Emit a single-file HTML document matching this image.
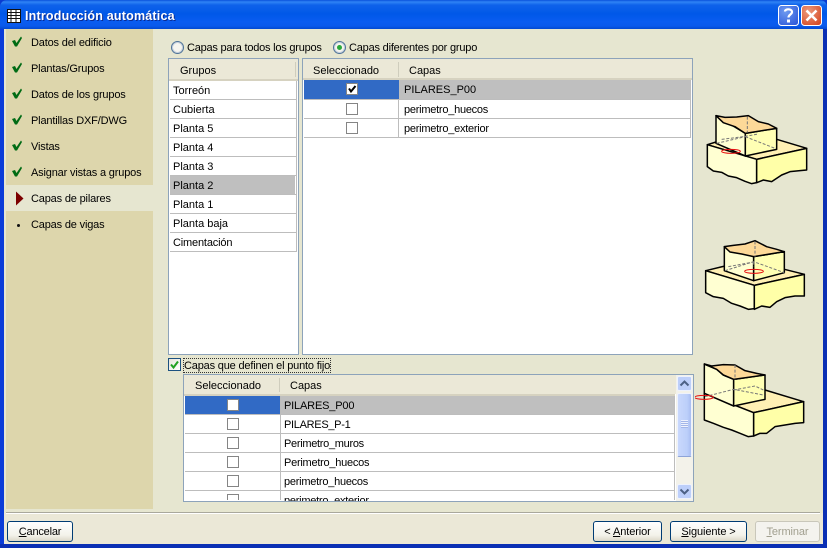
<!DOCTYPE html>
<html><head><meta charset="utf-8"><title>Introducción automática</title>
<style>
html,body{margin:0;padding:0;width:827px;height:548px;overflow:hidden;background:#0a3bd0}
*{box-sizing:border-box}
.a{position:absolute}
.t{position:absolute;white-space:nowrap;font:11px/13px "Liberation Sans",sans-serif;color:#000;margin-top:1px;letter-spacing:-.17px}
.z{letter-spacing:0}
.r{position:absolute;height:1px;background:#bdbdbd}
.cb{position:absolute;width:12px;height:12px;border:1px solid #858585;background:#fff}
.rad{position:absolute;width:13px;height:13px;border-radius:50%;border:1px solid #4f7398;box-shadow:inset 0 0 0 1px #c4cfdc;background:#f6f5ef}
.btn{position:absolute;height:21px;top:521px;border:1px solid #003c74;border-radius:3px;background:linear-gradient(#fff,#f3f2ea 70%,#dcd8c8);font:11px/20px "Liberation Sans",sans-serif;text-align:center;color:#000;letter-spacing:-.1px}
</style></head><body>
<!-- window frame -->
<div class="a" style="left:0;top:0;width:827px;height:548px;border-radius:7px 7px 0 0;background:#0a3ed6"></div>
<div class="a" style="left:0;top:0;width:827px;height:30px;border-radius:7px 7px 0 0;background:linear-gradient(#0a52dc 0,#2f83f5 2px,#0f62ea 5px,#0058e8 14px,#0a5cf0 22px,#0a5aec 26px,#0043c8 30px)"></div>
<div class="a" style="left:0;top:29px;width:4px;height:519px;background:#0a3cd8"></div>
<div class="a" style="left:823px;top:29px;width:4px;height:519px;background:#0a2fb4"></div>
<div class="a" style="left:0;top:544px;width:827px;height:4px;background:#0a2fb4"></div>
<!-- client -->
<div class="a" style="left:4px;top:29px;width:819px;height:515px;background:#e6e6d0"></div>
<div class="a" style="left:4px;top:513px;width:819px;height:31px;background:#ebe8d7"></div>
<div class="a" style="left:6px;top:512px;width:814px;height:1px;background:#a9a89c"></div>
<div class="a" style="left:6px;top:513px;width:814px;height:1px;background:#fff"></div>
<!-- title -->
<svg class="a" style="left:6px;top:8px" width="16" height="16" viewBox="0 0 16 16"><rect x="1.5" y="1.5" width="13" height="13" fill="#fff" stroke="#111"/><path d="M1 4.5H15M1 7.500H15M1 10.500H15M5 1V15M10 1V15" stroke="#111" fill="none"/></svg>
<div class="t z" style="left:25px;top:8px;font:bold 12.5px/15px 'Liberation Sans',sans-serif;color:#fff;text-shadow:1px 1px 0 #0a2a90;letter-spacing:.2px">Introducción automática</div>
<svg class="a" style="left:778px;top:5px" width="44" height="21" viewBox="0 0 44 21">
<defs><radialGradient id="h" cx=".35" cy=".3" r=".9"><stop offset="0" stop-color="#6f9bf0"/><stop offset="1" stop-color="#2a55d8"/></radialGradient><radialGradient id="c" cx=".35" cy=".3" r=".9"><stop offset="0" stop-color="#ec9a7c"/><stop offset="1" stop-color="#d4421c"/></radialGradient></defs>
<rect x=".5" y=".5" width="20" height="20" rx="3" fill="url(#h)" stroke="#fff"/>
<rect x="23.5" y=".5" width="20" height="20" rx="3" fill="url(#c)" stroke="#fff"/>
<path d="M7 6.500C7 3.500 14 3.500 14 7C14 9.500 10.500 9.500 10.500 12.500" fill="none" stroke="#fff" stroke-width="2.200"/><rect x="9" y="14.500" width="3" height="3" fill="#fff"/>
<path d="M28.500 5.500L38.500 15.500M38.500 5.500L28.500 15.500" stroke="#fff" stroke-width="2.600"/>
</svg>
<!-- sidebar -->
<div class="a" style="left:6px;top:29px;width:147px;height:480px;background:#ddd6ac"></div>
<div class="a" style="left:6px;top:185px;width:147px;height:26px;background:#e6e6d0"></div>
<svg class="a" style="left:0;top:0" width="30" height="190" viewBox="0 0 30 190" fill="#006b14">
<path d="M12 41L15 40L16.500 43L21 36.500L22 38L17 46.500H15Z"/>
<path d="M12 67L15 66L16.500 69L21 62.500L22 64L17 72.500H15Z"/>
<path d="M12 93L15 92L16.500 95L21 88.500L22 90L17 98.500H15Z"/>
<path d="M12 119L15 118L16.500 121L21 114.500L22 116L17 124.500H15Z"/>
<path d="M12 145L15 144L16.500 147L21 140.500L22 142L17 150.500H15Z"/>
<path d="M12 171L15 170L16.500 173L21 166.500L22 168L17 176.500H15Z"/>
</svg>
<svg class="a" style="left:15px;top:191px" width="10" height="15" viewBox="0 0 10 15"><path d="M1 0.500V14.500L8.500 7.500Z" fill="#7c0000"/></svg>
<div class="a" style="left:17px;top:224px;width:3px;height:3px;background:#111;border-radius:50%"></div>
<div class="t" style="left:31px;top:36px">Datos del edificio</div>
<div class="t" style="left:31px;top:62px">Plantas/Grupos</div>
<div class="t" style="left:31px;top:88px">Datos de los grupos</div>
<div class="t" style="left:31px;top:114px">Plantillas DXF/DWG</div>
<div class="t" style="left:31px;top:140px">Vistas</div>
<div class="t" style="left:31px;top:166px">Asignar vistas a grupos</div>
<div class="t" style="left:31px;top:192px">Capas de pilares</div>
<div class="t" style="left:31px;top:218px">Capas de vigas</div>
<!-- radios -->
<div class="rad" style="left:171px;top:41px"></div>
<div class="t" style="left:187px;top:41px;letter-spacing:-.22px">Capas para todos los grupos</div>
<div class="rad" style="left:333px;top:41px"></div>
<div class="a" style="left:337px;top:45px;width:5px;height:5px;border-radius:50%;background:#2aa83a"></div>
<div class="t" style="left:349px;top:41px;letter-spacing:-.2px">Capas diferentes por grupo</div>
<!-- groups -->
<div class="a" style="left:168px;top:58px;width:131px;height:297px;border:1px solid #8da3ba;background:#fff"></div>
<div class="a" style="left:169px;top:59px;width:129px;height:20px;background:#ebe8d7"></div>
<div class="a" style="left:169px;top:79px;width:129px;height:2px;background:#d6d2c0"></div>
<div class="a" style="left:295px;top:62px;width:1px;height:15px;background:#cfcdbd"></div>
<div class="t z" style="left:180px;top:64px">Grupos</div>
<div class="a" style="left:170px;top:175px;width:125px;height:19px;background:#bfbfbf"></div>
<div class="a" style="left:296px;top:81px;width:1px;height:171px;background:#bdbdbd"></div>
<div class="r" style="left:170px;top:99px;width:126px"></div>
<div class="r" style="left:170px;top:118px;width:126px"></div>
<div class="r" style="left:170px;top:137px;width:126px"></div>
<div class="r" style="left:170px;top:156px;width:126px"></div>
<div class="r" style="left:170px;top:175px;width:126px"></div>
<div class="r" style="left:170px;top:194px;width:126px"></div>
<div class="r" style="left:170px;top:213px;width:126px"></div>
<div class="r" style="left:170px;top:232px;width:126px"></div>
<div class="r" style="left:170px;top:251px;width:126px"></div>
<div class="t z" style="left:173px;top:84px">Torreón</div>
<div class="t z" style="left:173px;top:103px">Cubierta</div>
<div class="t z" style="left:173px;top:122px">Planta 5</div>
<div class="t z" style="left:173px;top:141px">Planta 4</div>
<div class="t z" style="left:173px;top:160px">Planta 3</div>
<div class="t z" style="left:173px;top:179px">Planta 2</div>
<div class="t z" style="left:173px;top:198px">Planta 1</div>
<div class="t z" style="left:173px;top:217px">Planta baja</div>
<div class="t" style="left:173px;top:236px">Cimentación</div>
<!-- right table -->
<div class="a" style="left:302px;top:58px;width:391px;height:297px;border:1px solid #8da3ba;background:#fff"></div>
<div class="a" style="left:303px;top:59px;width:389px;height:19px;background:#ebe8d7"></div>
<div class="a" style="left:303px;top:78px;width:389px;height:2px;background:#d6d2c0"></div>
<div class="a" style="left:398px;top:62px;width:1px;height:15px;background:#cfcdbd"></div>
<div class="t z" style="left:313px;top:64px">Seleccionado</div>
<div class="t z" style="left:409px;top:64px">Capas</div>
<div class="a" style="left:304px;top:80px;width:95px;height:19px;background:#316ac5"></div>
<div class="a" style="left:399px;top:80px;width:292px;height:19px;background:#bfbfbf"></div>
<div class="r" style="left:304px;top:99px;width:387px"></div>
<div class="r" style="left:304px;top:118px;width:387px"></div>
<div class="r" style="left:304px;top:137px;width:387px"></div>
<div class="a" style="left:398px;top:99px;width:1px;height:38px;background:#bdbdbd"></div>
<div class="a" style="left:690px;top:80px;width:1px;height:58px;background:#bdbdbd"></div>
<div class="cb" style="left:346px;top:83px"></div>
<svg class="a" style="left:346px;top:83px" width="12" height="12" viewBox="0 0 12 12"><path d="M3 5.500L5 8.500L9.500 3" fill="none" stroke="#000" stroke-width="2"/></svg>
<div class="cb" style="left:346px;top:103px"></div>
<div class="cb" style="left:346px;top:122px"></div>
<div class="t z" style="left:404px;top:83px">PILARES_P00</div>
<div class="t" style="left:404px;top:103px;letter-spacing:-.25px">perimetro_huecos</div>
<div class="t" style="left:404px;top:122px;letter-spacing:-.25px">perimetro_exterior</div>
<!-- checkbox fijo -->
<div class="a" style="left:168px;top:358px;width:13px;height:13px;border:1px solid #1c5180;background:linear-gradient(135deg,#e6e4da,#fff)"></div>
<svg class="a" style="left:168px;top:358px" width="13" height="13" viewBox="0 0 13 13"><path d="M3 6.500L5.500 9.500L10 3.500" fill="none" stroke="#21a121" stroke-width="2"/></svg>
<div class="a" style="left:183px;top:358px;width:148px;height:15px;border:1px dotted #333"></div>
<div class="t" style="left:184px;top:359px;letter-spacing:-.18px">Capas que definen el punto fijo</div>
<!-- lower table -->
<div class="a" style="left:183px;top:374px;width:511px;height:128px;border:1px solid #8da3ba;background:#fff;overflow:hidden"></div>
<div class="a" style="left:184px;top:375px;width:509px;height:19px;background:#ebe8d7"></div>
<div class="a" style="left:184px;top:394px;width:491px;height:2px;background:#d6d2c0"></div>
<div class="a" style="left:279px;top:378px;width:1px;height:14px;background:#cfcdbd"></div>
<div class="t z" style="left:195px;top:379px">Seleccionado</div>
<div class="t z" style="left:290px;top:379px">Capas</div>
<div class="a" style="left:185px;top:396px;width:95px;height:18px;background:#316ac5"></div>
<div class="a" style="left:281px;top:396px;width:393px;height:18px;background:#bfbfbf"></div>
<div class="r" style="left:185px;top:414px;width:489px"></div>
<div class="r" style="left:185px;top:433px;width:489px"></div>
<div class="r" style="left:185px;top:452px;width:489px"></div>
<div class="r" style="left:185px;top:471px;width:489px"></div>
<div class="r" style="left:185px;top:490px;width:489px"></div>
<div class="a" style="left:280px;top:396px;width:1px;height:104px;background:#bdbdbd"></div>
<div class="a" style="left:674px;top:396px;width:1px;height:104px;background:#bdbdbd"></div>
<div class="cb" style="left:227px;top:399px"></div>
<div class="cb" style="left:227px;top:418px"></div>
<div class="cb" style="left:227px;top:437px"></div>
<div class="cb" style="left:227px;top:456px"></div>
<div class="cb" style="left:227px;top:475px"></div>
<div class="a" style="left:227px;top:494px;width:12px;height:6px;border:1px solid #858585;border-bottom:0;background:#fff"></div>
<div class="t" style="left:284px;top:399px">PILARES_P00</div>
<div class="t" style="left:284px;top:418px;letter-spacing:-.3px">PILARES_P-1</div>
<div class="t" style="left:284px;top:437px;letter-spacing:-.3px">Perimetro_muros</div>
<div class="t" style="left:284px;top:456px;letter-spacing:-.25px">Perimetro_huecos</div>
<div class="t" style="left:284px;top:475px;letter-spacing:-.25px">perimetro_huecos</div>
<div class="a" style="left:184px;top:491px;width:490px;height:10px;overflow:hidden"><div class="t" style="left:100px;top:3px;letter-spacing:-.25px">perimetro_exterior</div></div>
<!-- scrollbar -->
<div class="a" style="left:676px;top:375px;width:17px;height:126px;background:#f3f2ea"></div>
<div class="a" style="left:677px;top:376px;width:15px;height:15px;border:1px solid #eef2fd;border-radius:2px;background:#bdcffa"></div>
<svg class="a" style="left:677px;top:376px" width="15" height="15" viewBox="0 0 15 15"><path d="M3.500 9.500L7.500 5.500L11.500 9.500" fill="none" stroke="#4d6185" stroke-width="2"/></svg>
<div class="a" style="left:677px;top:393px;width:15px;height:64px;border:1px solid #eef2fd;border-bottom-color:#8ea4d8;border-radius:2px;background:linear-gradient(90deg,#c9d8fc,#bccffa 70%,#a9bef2)"></div>
<div class="a" style="left:681px;top:420px;width:7px;height:8px;background:repeating-linear-gradient(#eef2fd 0 1px,#a3b6e8 1px 2px)"></div>
<div class="a" style="left:677px;top:484px;width:15px;height:15px;border:1px solid #eef2fd;border-radius:2px;background:#bdcffa"></div>
<svg class="a" style="left:677px;top:484px" width="15" height="15" viewBox="0 0 15 15"><path d="M3.500 5.500L7.500 9.500L11.500 5.500" fill="none" stroke="#4d6185" stroke-width="2"/></svg>
<!-- drawing 1 -->
<svg class="a" style="left:700px;top:0" width="123" height="200" viewBox="0 0 369 600" stroke-linejoin="round">
<g stroke="#000" stroke-width="4.500">
<path d="M22 434L48 426L230 418L320 445L170 478Z" fill="#fff0b4"/>
<path d="M22 434L170 478V548L155 551L135 544L110 533L85 528L65 517L40 513L22 500Z" fill="#ffffd2"/>
<path d="M170 478L320 445V510L300 512L270 515L245 525L215 545L190 540L170 548Z" fill="#ffffa8"/>
<path d="M48 347L136 400V468L48 430Z" fill="#ffffd2"/>
<path d="M136 400L230 385V448L136 468Z" fill="#ffffb4"/>
<path d="M48 347L75 352L110 351L145 347L175 365L205 372L230 385L136 400L105 380L70 368Z" fill="#fdd998"/>
</g>
<path d="M142 350V398M50 430L136 410M136 410L225 445M65 418L130 410L175 402" fill="none" stroke="#777" stroke-width="3" stroke-dasharray="9 5"/>
<ellipse cx="93" cy="454" rx="28" ry="6" fill="none" stroke="#e81010" stroke-width="3"/>
</svg>
<!-- drawings 2 and 3 -->
<svg class="a" style="left:695px;top:230px" width="128" height="210" viewBox="0 0 384 630" stroke-linejoin="round">
<g stroke="#000" stroke-width="4.500">
<path d="M32 122L90 108L268 118L328 133L178 166Z" fill="#fff0b4"/>
<path d="M32 122L178 166V236L160 238L135 228L110 220L85 205L55 200L32 188Z" fill="#ffffd2"/>
<path d="M178 166L328 133V198L300 198L270 203L245 215L225 232L200 228L178 238Z" fill="#ffffa8"/>
<path d="M88 50L176 80V152L88 122Z" fill="#ffffd2"/>
<path d="M176 80L268 65V128L176 152Z" fill="#ffffb4"/>
<path d="M88 50L115 46L150 42L180 32L215 50L245 58L268 65L176 80L140 72L105 66Z" fill="#fdd998"/>
<path d="M28 490L210 480L326 515L176 548Z" fill="#fff0b4"/>
<path d="M28 490L176 548V618L160 620L135 610L110 600L85 592L55 580L28 570Z" fill="#ffffd2"/>
<path d="M176 548L326 515V578L300 580L270 585L240 590L215 610L195 610L176 618Z" fill="#ffffa8"/>
<path d="M28 402L65 418L85 435L116 448V528L28 490Z" fill="#ffffd2"/>
<path d="M116 448L210 435V508L116 528Z" fill="#ffffb4"/>
<path d="M28 402L50 408L85 404L120 405L150 422L185 430L210 435L116 448L85 435L65 418Z" fill="#fdd998"/>
</g>
<path d="M180 34V80M90 122L176 95L268 128M176 95V110M100 110L175 96M120 405V448M30 500L116 478L205 495M116 480L180 468L205 480" fill="none" stroke="#777" stroke-width="3" stroke-dasharray="9 5"/>
<ellipse cx="177" cy="124" rx="28" ry="6" fill="none" stroke="#e81010" stroke-width="3"/>
<ellipse cx="27" cy="502" rx="28" ry="6" fill="none" stroke="#e81010" stroke-width="3"/>
</svg>
<!-- buttons -->
<div class="btn" style="left:7px;width:66px;letter-spacing:-.2px"><u>C</u>ancelar</div>
<div class="btn" style="left:593px;width:69px">&lt; <u>A</u>nterior</div>
<div class="btn" style="left:670px;width:77px"><u>S</u>iguiente &gt;</div>
<div class="btn" style="left:755px;width:65px;border-color:#c9c7ba;background:#f4f3ee;color:#a19f8f"><u>T</u>erminar</div>
</body></html>
